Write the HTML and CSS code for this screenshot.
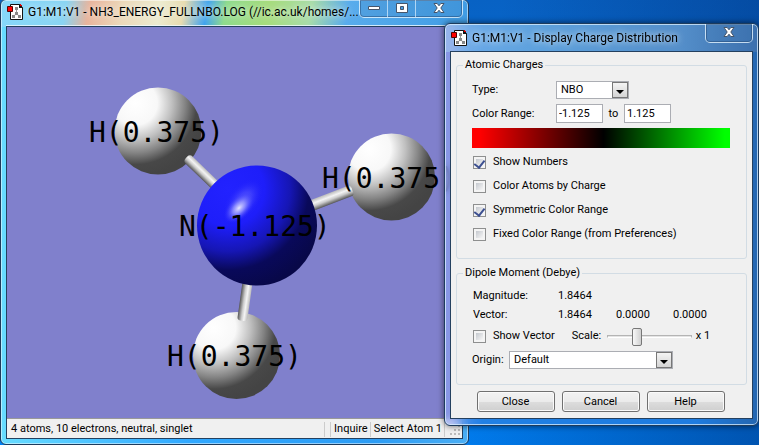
FILE: index.html
```html
<!DOCTYPE html>
<html lang="en">
<head>
    <meta charset="UTF-8">
    <meta name="viewport" content="width=device-width, initial-scale=1.0">
    <title>G1:M1:V1 - Display Charge Distribution</title>
    <link rel="stylesheet" href="styles.css">
</head>
<body>
    <svg class="defs" width="0" height="0" aria-hidden="true">
        <symbol id="appIcon" viewBox="0 0 16 16">
            <path d="M3.5 .5h9l3 3v12h-12z" fill="#fff" stroke="#111"/>
            <path d="M12 0l4 4h-4z" fill="#111"/>
            <path d="M13 0h1v1h1v1h-2z" fill="#d00"/>
            <path d="M9.5 5v5M9.5 9l-3 4M9.5 9l3 4" stroke="#999" fill="none"/>
            <path d="M8 3h3v3H8zM8 8h3v3H8zM5 11h3v3H5zM11 11h3v3h-3z" fill="#888"/>
            <path d="M.5 2.5h5v5h-5z" fill="#f00" stroke="#500"/>
        </symbol>
        <symbol id="closeIcon" viewBox="0 0 12 10">
            <path d="M1 .5h3.2L6 2.8 7.800 .5H11L7.800 5 11 9.500H7.800L6 7.200 4.200 9.500H1L4.200 5z" fill="#fff" stroke="#46566b"/>
        </symbol>
    </svg>

    <div class="window main-window">
        <div class="titlebar">
            <svg class="app-icon"><use href="#appIcon"/></svg>
            <span class="title">G1:M1:V1 - NH3_ENERGY_FULLNBO.LOG (//ic.ac.uk/homes/...</span>
            <div class="window-buttons">
                <button type="button" aria-label="Minimize">
                    <svg width="12" height="6" viewBox="0 0 12 6"><path d="M.5 1.500h11v3H.5z" fill="#fff" stroke="#46566b"/></svg>
                </button>
                <button type="button" aria-label="Maximize">
                    <svg width="12" height="10" viewBox="0 0 12 10"><path d="M.5 .5h11v9H.5zM4.500 3.500h3v3h-3z" fill="#fff" fill-rule="evenodd" stroke="#46566b"/></svg>
                </button>
                <button type="button" class="wide" aria-label="Close">
                    <svg width="12" height="10"><use href="#closeIcon"/></svg>
                </button>
            </div>
        </div>
        <div class="client">
            <svg class="molecule" viewBox="0 0 456 391" preserveAspectRatio="xMinYMin slice">
                <defs>
                    <radialGradient id="hydrogen" cx=".24" cy=".18" r=".84">
                        <stop offset="0" stop-color="#fff"/>
                        <stop offset=".3" stop-color="#f8f8f8"/>
                        <stop offset=".5" stop-color="#c0c0c0"/>
                        <stop offset=".68" stop-color="#848484"/>
                        <stop offset=".84" stop-color="#484848"/>
                        <stop offset="1" stop-color="#444"/>
                    </radialGradient>
                    <radialGradient id="nitrogen" cx=".26" cy=".2" r=".86">
                        <stop offset="0" stop-color="#2222ff"/>
                        <stop offset=".35" stop-color="#1e1efa"/>
                        <stop offset=".6" stop-color="#1616b4"/>
                        <stop offset=".78" stop-color="#09095a"/>
                        <stop offset="1" stop-color="#080848"/>
                    </radialGradient>
                    <radialGradient id="shine">
                        <stop offset="0" stop-color="#e4e4ff"/>
                        <stop offset=".4" stop-color="#9c9cff" stop-opacity=".75"/>
                        <stop offset="1" stop-color="#2222ff" stop-opacity="0"/>
                    </radialGradient>
                    <linearGradient id="bond" x1="0" y1="0" x2="0" y2="1">
                        <stop offset="0" stop-color="#bbb"/>
                        <stop offset=".35" stop-color="#f4f4f4"/>
                        <stop offset=".6" stop-color="#ccc"/>
                        <stop offset="1" stop-color="#555"/>
                    </linearGradient>
                </defs>
                <circle cx="151" cy="104" r="43.5" fill="url(#hydrogen)"/>
                <circle cx="384.500" cy="150" r="43.5" fill="url(#hydrogen)"/>
                <circle cx="229.500" cy="328.500" r="43.5" fill="url(#hydrogen)"/>
                <g fill="url(#bond)">
                    <rect x="-5" y="-5" width="50" height="10" rx="4" transform="translate(183 134) rotate(44)"/>
                    <rect x="-5" y="-5" width="48" height="11" rx="3" transform="translate(305 178) rotate(-21)"/>
                    <rect x="-5" y="-5" width="40" height="10" rx="3" transform="translate(240 259) rotate(98)"/>
                </g>
                <circle cx="250" cy="198.500" r="60" fill="url(#nitrogen)"/>
                <ellipse cx="236" cy="174" rx="26" ry="15" transform="rotate(-50 236 174)" fill="url(#shine)" opacity=".35"/>
                <ellipse cx="232" cy="181" rx="19" ry="11" transform="rotate(-45 232 181)" fill="url(#shine)"/>
                <g class="atom-label">
                    <text x="82" y="115">H(0.375)</text>
                    <text x="315" y="161">H(0.375)</text>
                    <text x="172" y="209">N(-1.125)</text>
                    <text x="160" y="339">H(0.375)</text>
                </g>
            </svg>
            <div class="statusbar">
                <span class="status-text">4 atoms, 10 electrons, neutral, singlet</span>
                <span class="status-cell"></span>
                <span class="status-cell">Inquire</span>
                <span class="status-cell">Select Atom 1</span>
                <span class="status-cell grip">
                    <svg width="12" height="12" viewBox="0 0 12 12"><path d="M9 1h2v2H9zM5 5h2v2H5zM9 5h2v2H9zM1 9h2v2H1zM5 9h2v2H5zM9 9h2v2H9z" fill="#bbb"/></svg>
                </span>
            </div>
        </div>
    </div>

    <div class="window dialog">
        <div class="titlebar">
            <svg class="app-icon"><use href="#appIcon"/></svg>
            <span class="title">G1:M1:V1 - Display Charge Distribution</span>
            <div class="window-buttons">
                <button type="button" class="wide" aria-label="Close">
                    <svg width="12" height="10"><use href="#closeIcon"/></svg>
                </button>
            </div>
        </div>
        <form class="client">
            <fieldset class="charges">
                <legend>Atomic Charges</legend>
                <div class="row">
                    <label class="name" for="type">Type:</label>
                    <span class="combo combo-type">
                        <select id="type"><option>NBO</option></select>
                        <span class="arrow"></span>
                    </span>
                </div>
                <div class="row">
                    <label class="name" for="rangeMin">Color Range:</label>
                    <input type="text" id="rangeMin" value="-1.125">
                    <label class="to" for="rangeMax">to</label>
                    <input type="text" id="rangeMax" value="1.125">
                </div>
                <div class="color-bar"></div>
                <label class="check"><input type="checkbox" checked>Show Numbers</label>
                <label class="check"><input type="checkbox">Color Atoms by Charge</label>
                <label class="check"><input type="checkbox" checked>Symmetric Color Range</label>
                <label class="check"><input type="checkbox">Fixed Color Range (from Preferences)</label>
            </fieldset>

            <fieldset class="dipole">
                <legend>Dipole Moment (Debye)</legend>
                <div class="values">
                    <span>Magnitude:</span><span>1.8464</span><span></span><span></span>
                    <span>Vector:</span><span>1.8464</span><span>0.0000</span><span>0.0000</span>
                </div>
                <div class="row">
                    <label class="check"><input type="checkbox">Show Vector</label>
                    <label class="scale" for="scale">Scale:</label>
                    <input type="range" id="scale" min="0" max="100" value="33">
                    <span>x 1</span>
                </div>
                <div class="row">
                    <label class="origin" for="origin">Origin:</label>
                    <span class="combo combo-origin">
                        <select id="origin"><option>Default</option></select>
                        <span class="arrow"></span>
                    </span>
                </div>
            </fieldset>

            <div class="actions">
                <button type="button">Close</button>
                <button type="button">Cancel</button>
                <button type="button">Help</button>
            </div>
        </form>
    </div>
</body>
</html>
```

FILE: styles.css
```css
*{
    box-sizing: border-box;
}

body{
    margin: 0;
    height: 100vh;
    overflow: hidden;
    position: relative;
    font-family: Roboto, "Liberation Sans", sans-serif;
    font-size: 11px;
    line-height: 14px;
    color: #000;
    background: linear-gradient(100deg, transparent 60%, rgba(0, 40, 110, 0.5)), linear-gradient(#0862c4, #0080f4);
}

button, input, select{
    font: inherit;
    color: inherit;
    margin: 0;
}

.defs{
    position: absolute;
}

/* windows */
.window{
    position: absolute;
    display: flex;
    flex-direction: column;
    border: 1px solid #1d3b5c;
    border-radius: 6px;
    padding: 0 5px 5px;
}

.main-window{
    left: 0;
    top: -1px;
    bottom: 0;
    width: 469px;
    background:
        linear-gradient(100deg, #86d8fa, #8ad4f2 14%, #e8b49c 19%, #ecd8b8 26%, #ecebcf 34%, #e8dcb0 39%, #3fa4ee 44%, #8edb8c 48%, #a6dc7c 57%, #a8dca8 66%, #58acec 74%, #409ce4) 0 0 / 100% 27px no-repeat,
        linear-gradient(90deg, #68dcff, #30a8ff 40%, #2c9cf4 80%, #4aaef4);
    box-shadow: inset 0 0 0 1px rgba(255, 255, 255, 0.5);
}

.dialog{
    left: 444px;
    top: 23px;
    width: 315px;
    padding-bottom: 6px;
    background:
        linear-gradient(90deg, rgba(160, 200, 240, 0.6), rgba(100, 165, 220, 0.9) 30%, rgba(90, 145, 200, 0.9) 75%, #3c70ae) 0 0 / 100% 28px no-repeat,
        linear-gradient(90deg, rgba(140, 165, 245, 0.6) 2%, #2080e4 12%, #1e7ce0 80%, #2466b0);
    backdrop-filter: blur(3px);
    box-shadow: inset 0 0 0 1px rgba(220, 240, 255, 0.75), 0 0 6px rgba(0, 0, 0, 0.6);
}

.titlebar{
    display: flex;
    align-items: center;
    height: 27px;
}

.main-window .titlebar{
    height: 26px;
    padding-bottom: 3px;
}

.app-icon{
    flex: none;
    width: 16px;
    height: 16px;
    margin: 0 5px 0 1px;
}

.title{
    flex: 1;
    min-width: 0;
    font-size: 12px;
    line-height: 16px;
    white-space: nowrap;
    text-shadow: 0 0 6px rgba(255, 255, 255, 0.7), 0 0 10px rgba(255, 255, 255, 0.5);
}

.window-buttons{
    display: flex;
    flex: none;
    align-self: flex-start;
    border: 1px solid rgba(230, 245, 255, 0.8);
    border-top: none;
    border-radius: 0 0 5px 5px;
    box-shadow: inset 0 0 0 1px rgba(30, 60, 100, 0.5);
}

.window-buttons button{
    display: flex;
    align-items: center;
    justify-content: center;
    width: 28px;
    height: 17px;
    padding: 0 0 2px;
    border: none;
    border-right: 1px solid rgba(220, 240, 255, 0.7);
    background: rgba(60, 120, 180, 0.2);
}

.window-buttons .wide{
    width: 46px;
    border-right: none;
}

.dialog .window-buttons button{
    height: 18px;
}

.client{
    border: 1px solid #24405f;
    background: #f0f0f0;
}

.main-window .client{
    flex: 1;
    display: flex;
    flex-direction: column;
    min-height: 0;
    box-shadow: 0 -1px 0 rgba(240, 250, 255, 0.8);
}

.molecule{
    display: block;
    flex: 1;
    min-height: 0;
    width: 100%;
    background: #8080cc;
}

.atom-label{
    font-family: "DejaVu Sans Mono", monospace;
    font-size: 28px;
}

.statusbar{
    display: flex;
    align-items: center;
    height: 20px;
    border-top: 1px solid #999;
    padding: 1px 0 0 4px;
    white-space: nowrap;
}

.status-text{
    flex: 1;
}

.status-cell{
    height: 15px;
    border-left: 1px solid #ccc;
    padding: 0 2px 0 3px;
}

.grip{
    padding: 2px 1px 0 4px;
}

/* dialog form */
.dialog .client{
    padding: 6px 5px;
}

fieldset{
    margin: 0;
    padding: 0 15px;
    border: 1px solid #d2dce4;
    border-radius: 3px;
    min-width: 0;
}

legend{
    padding: 0 2px;
    margin-left: -9px;
}

.charges{
    padding-top: 9px;
    padding-bottom: 7px;
}

.row{
    display: flex;
    align-items: center;
    white-space: nowrap;
}

.charges .row{
    margin-bottom: 5px;
}

.name{
    width: 84px;
}

.to{
    width: 21px;
    text-align: center;
}

input[type="text"]{
    width: 47px;
    height: 19px;
    padding: 0 2px;
    border: 1px solid #abadb3;
    background: #fff;
}

.combo{
    display: flex;
    height: 18px;
    border: 1px solid #abadb3;
    background: #fff;
}

.combo select{
    flex: 1;
    min-width: 0;
    padding: 0 4px;
    border: none;
    background: none;
    appearance: none;
}

.combo-type{
    width: 73px;
}

.combo-origin{
    width: 164px;
}

.arrow{
    display: flex;
    align-items: center;
    justify-content: center;
    width: 16px;
    border: 1px solid #777;
    background: linear-gradient(#f4f4f4, #d4d4d4);
    pointer-events: none;
}

.arrow::before{
    content: "";
    margin-top: 3px;
    border: 4px solid transparent;
    border-top-color: #000;
    border-bottom: none;
}

.color-bar{
    width: 258px;
    height: 20px;
    margin-bottom: 7px;
    background: linear-gradient(90deg, #f00 3%, #000 51%, #0f0 98%);
}

.check{
    display: flex;
    align-items: center;
    gap: 7px;
    padding-left: 1px;
}

.charges .check{
    height: 14px;
    margin-bottom: 10px;
}

.check input{
    appearance: none;
    display: flex;
    align-items: flex-start;
    justify-content: center;
    width: 13px;
    height: 13px;
    border: 1px solid #8e8f8f;
    background: linear-gradient(135deg, #c4c8ce, #f6f6f6) content-box, #f4f4f4;
    padding: 2px;
}

.check input:checked::before{
    content: "";
    width: 5px;
    height: 8px;
    margin-top: -1px;
    flex: none;
    border: solid #3c4f90;
    border-width: 0 2px 2px 0;
    transform: rotate(38deg);
}

.dipole{
    margin-top: 7px;
    padding-top: 9px;
    padding-bottom: 15px;
}

.values{
    display: grid;
    grid-template-columns: 85px 58px 57px auto;
    align-content: start;
    row-gap: 5px;
    padding-left: 1px;
    height: 38px;
}

.dipole .row{
    height: 18px;
    margin-bottom: 6px;
}

.dipole .row:last-child{
    margin-bottom: 0;
}

.scale{
    width: 35px;
    margin-left: 17px;
}

.origin{
    width: 37px;
}

input[type="range"]{
    appearance: none;
    width: 85px;
    height: 18px;
    margin-right: 4px;
    background: none;
}

input[type="range"]::-webkit-slider-runnable-track{
    height: 3px;
    border: 1px solid #b4b4b4;
    border-bottom-color: #fff;
    background: #e4e4e4;
}

input[type="range"]::-webkit-slider-thumb{
    appearance: none;
    width: 10px;
    height: 18px;
    margin-top: -8px;
    border: 1px solid #777;
    border-radius: 2px;
    background: linear-gradient(90deg, #f8f8f8, #d0d0d0);
}

.actions{
    display: flex;
    justify-content: center;
    gap: 7px;
    padding: 6px 2px 0 0;
}

.actions button{
    width: 78px;
    height: 21px;
    padding: 0;
    border: 1px solid #707070;
    border-radius: 3px;
    background: linear-gradient(#f2f2f2, #ebebeb 50%, #ddd 50%, #cfcfcf);
    box-shadow: inset 0 0 0 1px #fafafa;
}
```
